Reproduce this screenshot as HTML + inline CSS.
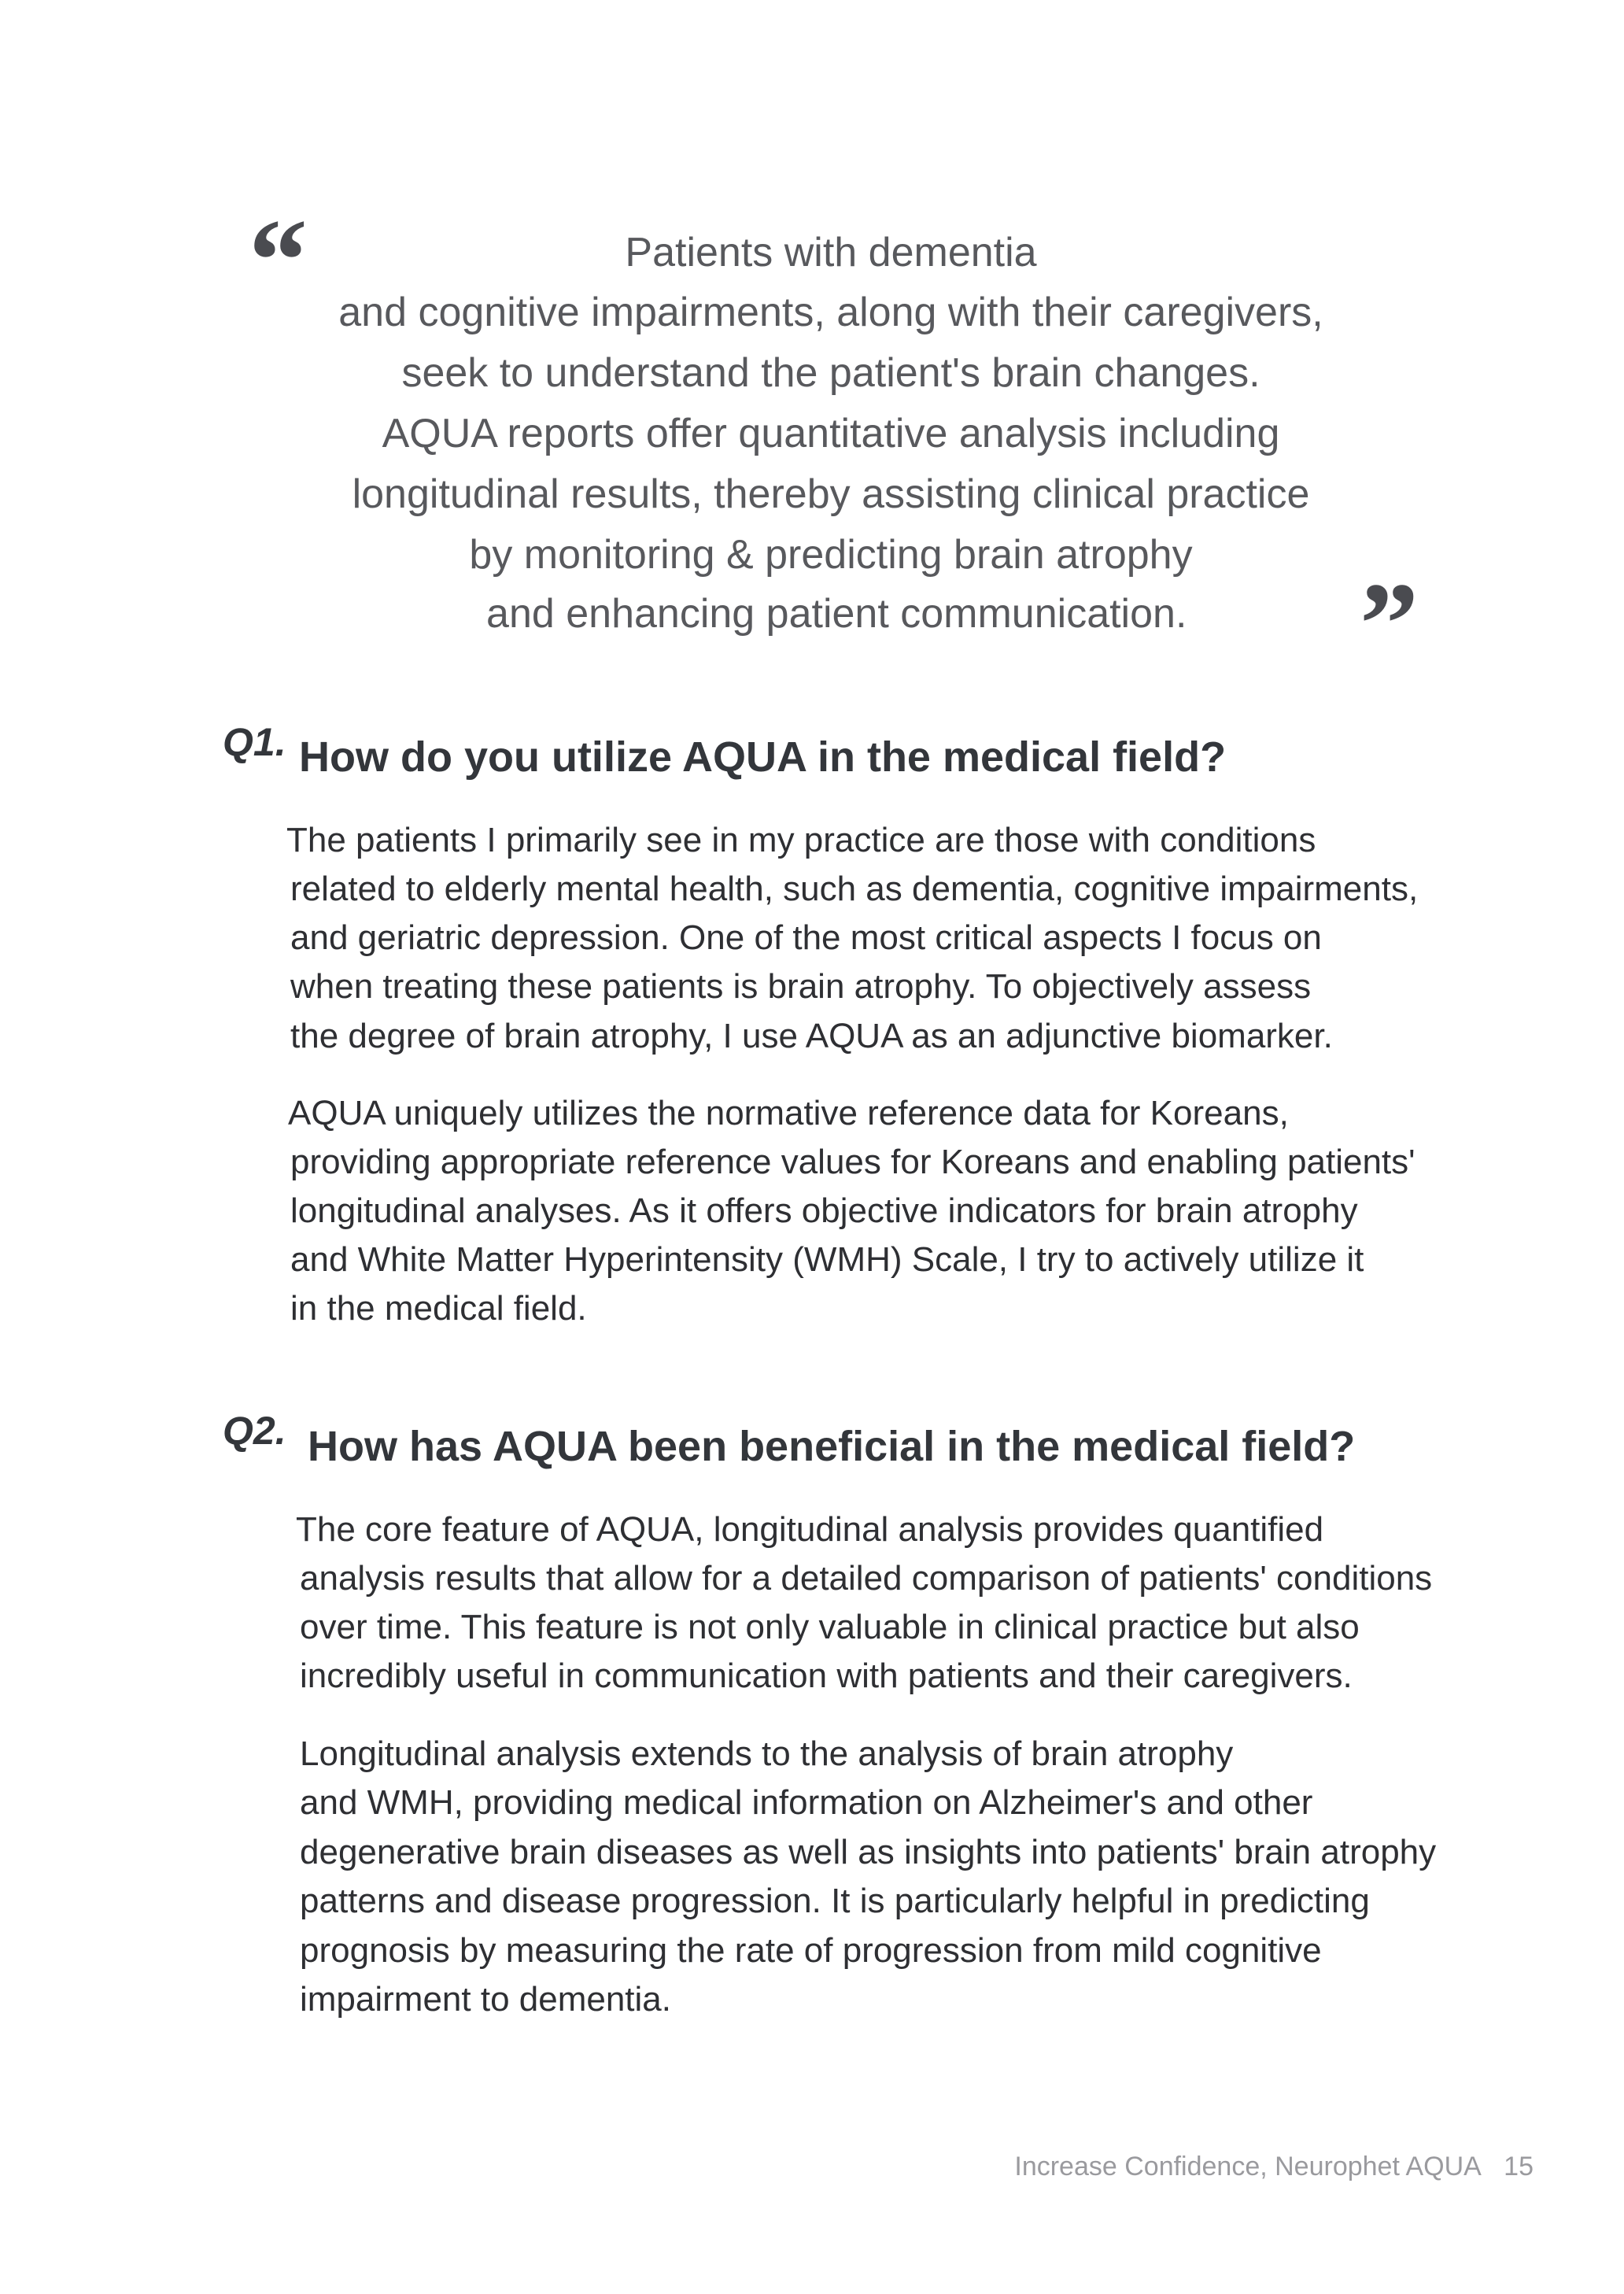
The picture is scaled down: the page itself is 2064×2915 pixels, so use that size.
<!DOCTYPE html>
<html><head><meta charset="utf-8"><style>
html,body{margin:0;padding:0;background:#fff;}
body{width:2064px;height:2915px;position:relative;overflow:hidden;font-family:"Liberation Sans",sans-serif;}
.l{position:absolute;white-space:nowrap;}
.q{left:0;width:2112px;text-align:center;font-size:52px;color:#58595d;height:60px;line-height:60px;}
.b{font-size:44px;color:#2e2f33;height:56px;line-height:56px;}
.h{font-size:54px;font-weight:bold;color:#33363b;height:64px;line-height:64px;}
.ql{font-size:50px;font-weight:bold;font-style:italic;color:#33363b;height:60px;line-height:60px;}
.qm{position:absolute;font-family:"Liberation Serif",serif;font-weight:bold;font-size:150px;color:#4a4b50;line-height:1;}
</style></head><body>
<div class="qm" style="left:316px;top:256px;">&ldquo;</div>
<div class="qm" style="left:1728px;top:718px;">&rdquo;</div>

<div class="l q" style="top:291px;">Patients with dementia</div>
<div class="l q" style="top:367px;">and cognitive impairments, along with their caregivers,</div>
<div class="l q" style="top:444px;">seek to understand the patient's brain changes.</div>
<div class="l q" style="top:521px;">AQUA reports offer quantitative analysis including</div>
<div class="l q" style="top:598px;">longitudinal results, thereby assisting clinical practice</div>
<div class="l q" style="top:675px;">by monitoring &amp; predicting brain atrophy</div>
<div class="l q" style="top:750px;">&nbsp;and enhancing patient communication.</div>

<div class="l ql" style="left:283px;top:913px;">Q1.</div>
<div class="l h" style="left:380px;top:930px;">How do you utilize AQUA in the medical field?</div>

<div class="l b" style="left:364px;top:1040px;">The patients I primarily see in my practice are those with conditions</div>
<div class="l b" style="left:369px;top:1102px;">related to elderly mental health, such as dementia, cognitive impairments,</div>
<div class="l b" style="left:369px;top:1164px;">and geriatric depression. One of the most critical aspects I focus on</div>
<div class="l b" style="left:369px;top:1226px;">when treating these patients is brain atrophy. To objectively assess</div>
<div class="l b" style="left:369px;top:1289px;">the degree of brain atrophy, I use AQUA as an adjunctive biomarker.</div>

<div class="l b" style="left:366px;top:1387px;">AQUA uniquely utilizes the normative reference data for Koreans,</div>
<div class="l b" style="left:369px;top:1449px;">providing appropriate reference values for Koreans and enabling patients'</div>
<div class="l b" style="left:369px;top:1511px;">longitudinal analyses. As it offers objective indicators for brain atrophy</div>
<div class="l b" style="left:369px;top:1573px;">and White Matter Hyperintensity (WMH) Scale, I try to actively utilize it</div>
<div class="l b" style="left:369px;top:1635px;">in the medical field.</div>

<div class="l ql" style="left:283px;top:1788px;">Q2.</div>
<div class="l h" style="left:391px;top:1806px;">How has AQUA been beneficial in the medical field?</div>

<div class="l b" style="left:376px;top:1916px;">The core feature of AQUA, longitudinal analysis provides quantified</div>
<div class="l b" style="left:381px;top:1978px;">analysis results that allow for a detailed comparison of patients' conditions</div>
<div class="l b" style="left:381px;top:2040px;">over time. This feature is not only valuable in clinical practice but also</div>
<div class="l b" style="left:381px;top:2102px;">incredibly useful in communication with patients and their caregivers.</div>

<div class="l b" style="left:381px;top:2201px;">Longitudinal analysis extends to the analysis of brain atrophy</div>
<div class="l b" style="left:381px;top:2263px;">and WMH, providing medical information on Alzheimer's and other</div>
<div class="l b" style="left:381px;top:2326px;">degenerative brain diseases as well as insights into patients' brain atrophy</div>
<div class="l b" style="left:381px;top:2388px;">patterns and disease progression. It is particularly helpful in predicting</div>
<div class="l b" style="left:381px;top:2451px;">prognosis by measuring the rate of progression from mild cognitive</div>
<div class="l b" style="left:381px;top:2513px;">impairment to dementia.</div>

<div class="l" style="right:115px;top:2733px;font-size:34px;color:#9a9a9e;line-height:40px;">Increase Confidence, Neurophet AQUA&nbsp;&nbsp;&nbsp;15</div>
</body></html>
